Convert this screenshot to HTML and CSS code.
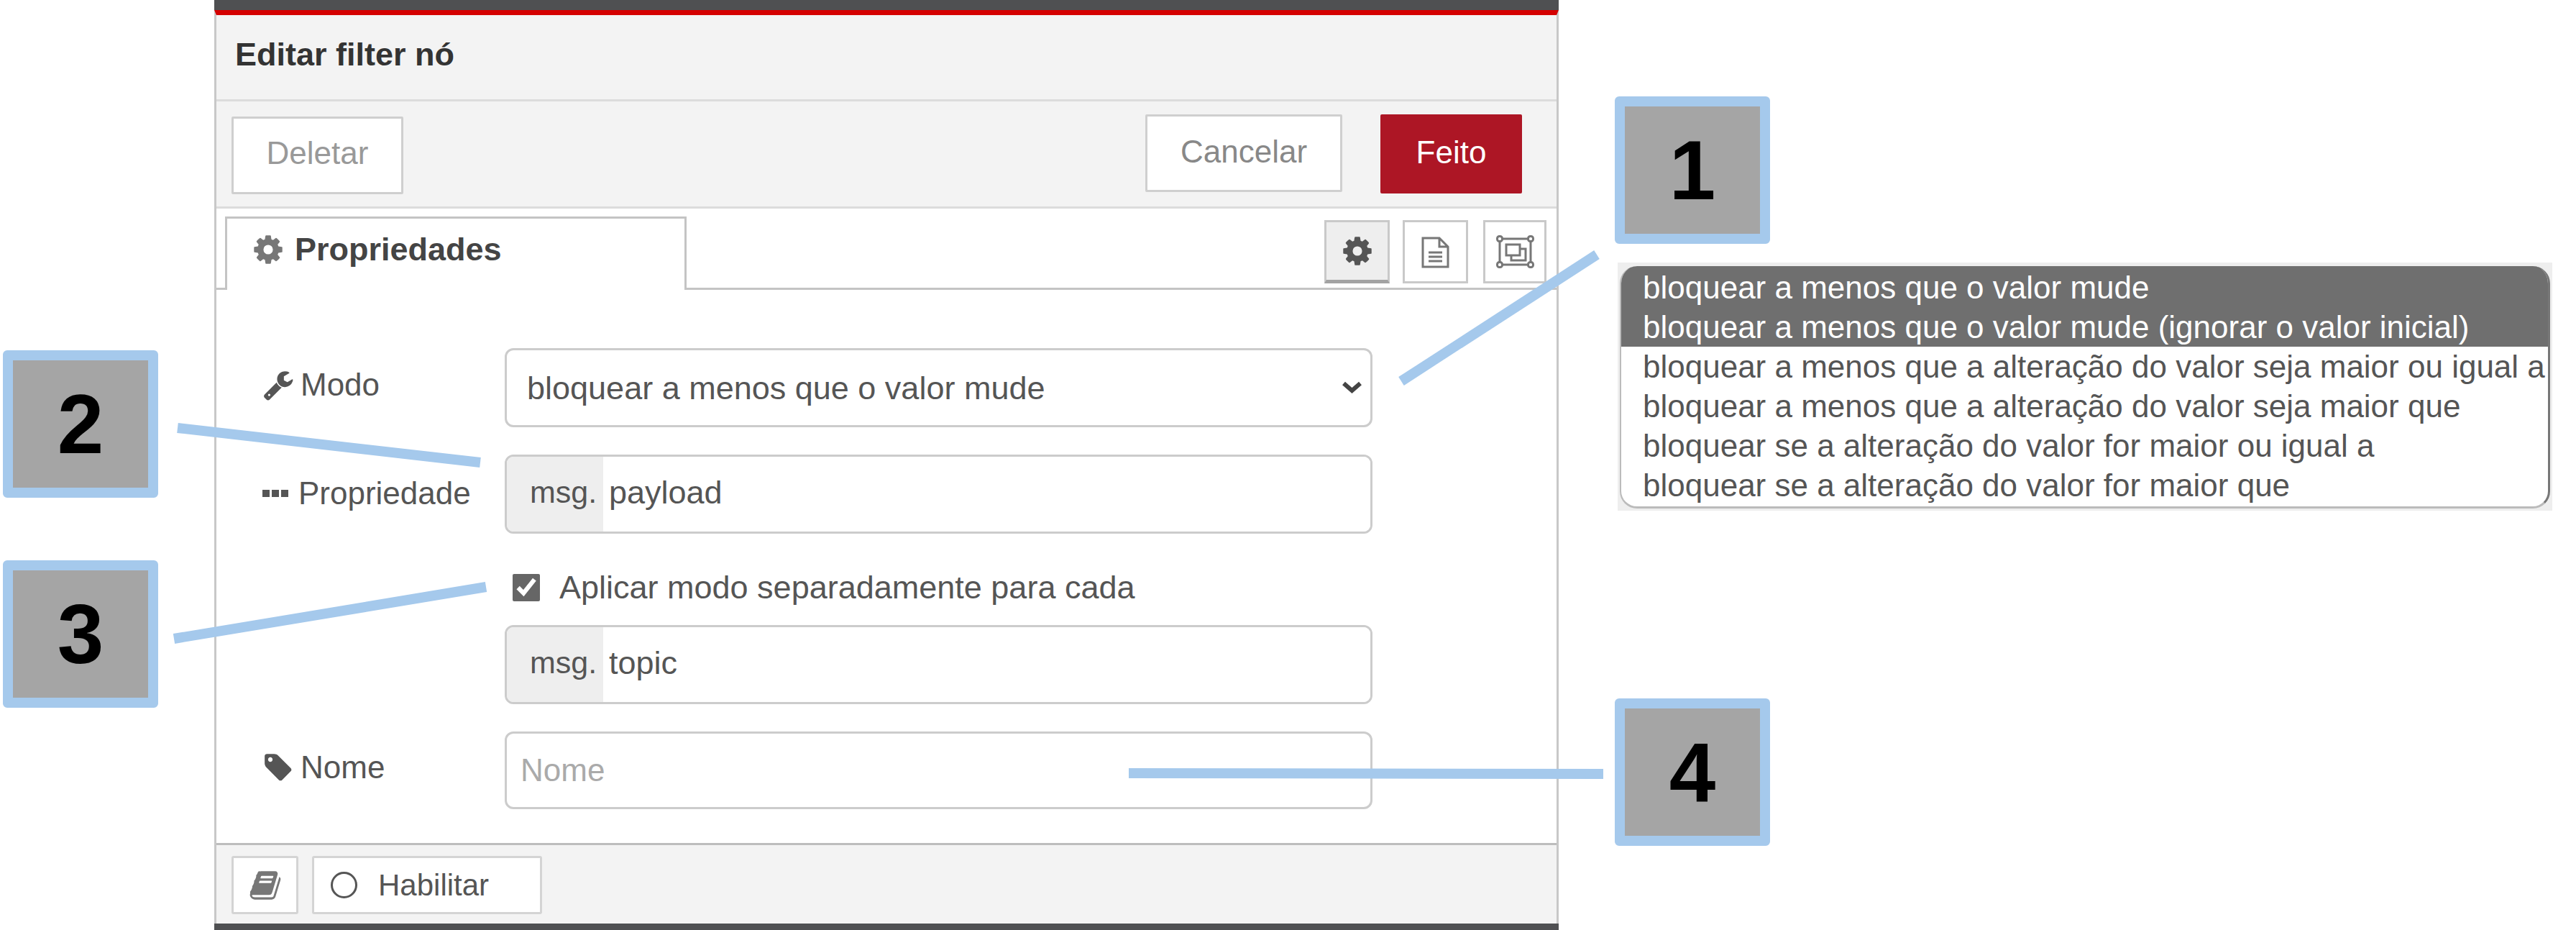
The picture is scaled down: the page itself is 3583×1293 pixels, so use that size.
FILE: index.html
```html
<!DOCTYPE html>
<html lang="pt-BR">
<head>
  <meta charset="UTF-8" />
  <title>Editar filter nó</title>
  <link rel="stylesheet" href="styles.css">
</head>
<body>
<svg class="icon-defs" width="0" height="0">
  <symbol id="i-cog" viewBox="0 0 1792 1792"><path d="M1152 896q0-106-75-181t-181-75-181 75-75 181 75 181 181 75 181-75 75-181zm512-109v222q0 12-8 23t-20 13l-185 28q-19 54-39 91 35 50 107 138 10 12 10 25t-9 23q-27 37-99 108t-94 71q-12 0-26-9l-138-108q-44 23-91 38-16 136-29 186-7 28-36 28h-222q-14 0-24.5-8.5t-11.5-21.5l-28-184q-49-16-90-37l-141 107q-10 9-25 9-14 0-25-11-126-114-165-168-7-10-7-23 0-12 8-23 15-21 51-66.5t54-70.5q-27-50-41-99l-183-27q-13-2-21-12.5t-8-23.5v-222q0-12 8-23t19-13l186-28q14-46 39-92-40-57-107-138-10-12-10-24 0-10 9-23 26-36 98.5-107.5t94.5-71.5q13 0 26 10l138 107q44-23 91-38 16-136 29-186 7-28 36-28h222q14 0 24.5 8.5t11.5 21.5l28 184q49 16 90 37l142-107q9-9 24-9 13 0 25 10 129 119 165 170 7 8 7 22 0 12-8 23-15 21-51 66.5t-54 70.5q26 50 41 98l183 28q13 2 21 12.5t8 23.5z"/></symbol>
  <symbol id="i-wrench" viewBox="0 0 1792 1792"><path d="M448 1472q0-26-19-45t-45-19-45 19-19 45 19 45 45 19 45-19 19-45zm644-420l-682 682q-37 37-90 37-52 0-91-37l-106-108q-38-36-38-90 0-53 38-91l681-681q39 98 114.5 173.5t173.5 114.5zm634-435q0 39-23 106-47 134-164.5 217.5t-258.5 83.5q-185 0-316.5-131.5t-131.5-316.5 131.5-316.5 316.5-131.5q58 0 121.5 16.5t107.5 46.5q16 11 16 28t-16 28l-293 169v224l193 107q5-3 79-48.5t135.5-81 70.5-35.5q15 0 23.5 10t8.5 25z"/></symbol>
  <symbol id="i-tag" viewBox="0 0 1792 1792"><path d="M576 448q0-53-37.5-90.5t-90.5-37.5-90.5 37.5-37.5 90.5 37.5 90.5 90.5 37.5 90.5-37.5 37.5-90.5zm1067 576q0 53-37 90l-491 492q-39 37-91 37-53 0-90-37l-715-716q-38-37-64.5-101t-26.5-117v-416q0-52 38-90t90-38h416q53 0 117 26.5t102 64.5l715 714q37 39 37 91z"/></symbol>
  <symbol id="i-book" viewBox="0 0 1792 1792"><path d="M1703 478q40 57 18 129l-275 906q-19 64-76.5 107.5t-122.5 43.5h-923q-77 0-148.5-53.5t-99.5-131.5q-24-67-2-127 0-4 3-27t4-37q1-8-3-21.5t-3-19.5q2-11 8-21t16.5-23.5 16.5-23.5q23-38 45-91.5t30-91.5q3-10 .5-30t-.5-28q3-11 17-28t17-23q21-36 42-92t25-90q1-9-2.5-32t.5-28q4-13 22-30.5t22-22.5q19-26 42.5-84.5t27.5-96.5q1-8-3-25.5t-2-26.5q2-8 9-18t18-23 17-21q8-12 16.5-30.5t15-35 16-36 19.5-32 26.5-23.5 36-11.5 47.5 5.5l-1 3q38-9 51-9h761q74 0 114 56t18 130l-274 906q-36 119-71.5 153.5t-128.5 34.5h-869q-27 0-38 15-11 16-1 43 24 70 144 70h923q29 0 56-15.5t35-41.5l300-987q7-22 5-57 38 15 59 43zm-1064 2q-4 13 2 22.5t20 9.5h608q13 0 25.5-9.5t16.5-22.5l21-64q4-13-2-22.5t-20-9.5h-608q-13 0-25.5 9.5t-16.5 22.5zm-83 256q-4 13 2 22.5t20 9.5h608q13 0 25.5-9.5t16.5-22.5l21-64q4-13-2-22.5t-20-9.5h-608q-13 0-25.5 9.5t-16.5 22.5z"/></symbol>
</svg>

<div class="editor">
  <div class="tray">
    <div class="tray-title">Editar filter nó</div>

    <div class="toolbar">
      <button class="btn btn-delete">Deletar</button>
      <button class="btn btn-cancel">Cancelar</button>
      <button class="btn btn-done">Feito</button>
    </div>

    <div class="tabs">
      <div class="tab">
        <svg class="tab-icon"><use href="#i-cog"/></svg>
        Propriedades
      </div>
      <div class="tab-buttons">
        <div class="tab-btn tab-btn-active">
          <svg class="tab-btn-cog"><use href="#i-cog"/></svg>
        </div>
        <div class="tab-btn">
          <svg class="tab-btn-doc" viewBox="0 0 39 45">
            <path d="M2 3 h23 l12 12 v28 h-35 z M25 3 v12 h12" />
            <path d="M10 23 h19 M10 29 h19 M10 35 h19" />
          </svg>
        </div>
        <div class="tab-btn tab-btn-frame">
          <svg class="tab-btn-appear" viewBox="0 0 53 46">
            <path d="M8 5 h37 M8 41 h37 M5 8 v30 M48 8 v30" />
            <rect x="1.5" y="1.5" width="7" height="7" rx="3"/>
            <rect x="44.5" y="1.5" width="7" height="7" rx="3"/>
            <rect x="1.5" y="37.5" width="7" height="7" rx="3"/>
            <rect x="44.5" y="37.5" width="7" height="7" rx="3"/>
            <rect x="14" y="13" width="19" height="15"/>
            <path d="M33 19 h8 v16 h-20 v-7" />
          </svg>
        </div>
      </div>
    </div>

    <div class="form">
      <div class="form-row">
        <label class="form-label"><svg class="label-icon"><use href="#i-wrench"/></svg>Modo</label>
        <div class="select-wrap">
          <select class="field select-field">
            <option>bloquear a menos que o valor mude</option>
          </select>
          <svg class="select-arrow" viewBox="0 0 29 17"><path d="M3 3 L14.5 13 L26 3"/></svg>
        </div>
      </div>

      <div class="form-row">
        <label class="form-label label-prop"><svg class="label-dots" viewBox="0 0 36 10"><rect width="10" height="10"/><rect x="13" width="10" height="10"/><rect x="26" width="10" height="10"/></svg>Propriedade</label>
        <div class="field typed-field">
          <span class="typed-prefix">msg.</span>
          <input class="typed-input" type="text" value="payload" />
        </div>
      </div>

      <div class="check-row">
        <input class="check-box" type="checkbox" checked />
        <span>Aplicar modo separadamente para cada</span>
      </div>

      <div class="form-row">
        <div class="form-label"></div>
        <div class="field typed-field">
          <span class="typed-prefix">msg.</span>
          <input class="typed-input" type="text" value="topic" />
        </div>
      </div>

      <div class="form-row">
        <label class="form-label"><svg class="label-icon"><use href="#i-tag"/></svg>Nome</label>
        <input class="field name-field" type="text" placeholder="Nome" />
      </div>
    </div>

    <div class="tray-footer">
      <button class="foot-btn foot-book"><svg class="book-icon"><use href="#i-book"/></svg></button>
      <button class="foot-btn foot-enable"><span class="enable-dot"></span>Habilitar</button>
    </div>
  </div>
</div>

<!-- anotacoes por cima do print -->
<div class="dropdown">
  <div class="dropdown-list">
    <div class="dropdown-item dropdown-item-on">bloquear a menos que o valor mude</div>
    <div class="dropdown-item dropdown-item-on">bloquear a menos que o valor mude (ignorar o valor inicial)</div>
    <div class="dropdown-item">bloquear a menos que a alteração do valor seja maior ou igual a</div>
    <div class="dropdown-item">bloquear a menos que a alteração do valor seja maior que</div>
    <div class="dropdown-item">bloquear se a alteração do valor for maior ou igual a</div>
    <div class="dropdown-item">bloquear se a alteração do valor for maior que</div>
  </div>
</div>

<svg class="leaders" viewBox="0 0 3583 1293">
  <line x1="1949" y1="530" x2="2221" y2="354"/>
  <line x1="247" y1="595" x2="668" y2="643"/>
  <line x1="242" y1="888" x2="676" y2="816"/>
  <line x1="1570" y1="1075" x2="2230" y2="1076"/>
</svg>

<div class="callout callout-1">1</div>
<div class="callout callout-2">2</div>
<div class="callout callout-3">3</div>
<div class="callout callout-4">4</div>
</body>
</html>
```

FILE: styles.css
```css
* { box-sizing: border-box; margin: 0; padding: 0; }
body {
  position: relative;
  width: 3583px;
  height: 1293px;
  overflow: hidden;
  background: #fff;
  font-family: "Liberation Sans", Arial, sans-serif;
  font-size: 44px;
  color: #555;
}
button, input, select {
  font-family: inherit;
  font-size: inherit;
  color: inherit;
}
.icon-defs {
  position: absolute;
}

/* painel */
.editor {
  margin-left: 298px;
  width: 1870px;
  height: 1293px;
  border-top: 14px solid #4f5052;
  border-bottom: 9px solid #4f5052;
}
.tray {
  height: 100%;
  display: flex;
  flex-direction: column;
  border-top: 7px solid #d40000;
  border-left: 3px solid #c8c8c8;
  border-right: 3px solid #c8c8c8;
}
.tray-title {
  height: 120px;
  padding: 0 0 8px 26px;
  display: flex;
  align-items: center;
  background: #f3f3f3;
  border-bottom: 3px solid #dcdcdc;
  font-size: 45px;
  font-weight: bold;
  color: #333;
}
.toolbar {
  height: 149px;
  display: flex;
  align-items: center;
  padding: 0 48px 0 21px;
  background: #f3f3f3;
  border-bottom: 3px solid #dcdcdc;
}
.btn {
  height: 108px;
  padding-bottom: 5px;
  background: #fff;
  border: 3px solid #cfcfcf;
  border-radius: 2px;
  color: #999;
}
.btn-delete {
  width: 239px;
  margin-top: 3px;
}
.btn-cancel {
  width: 274px;
  margin: -2px 0 0 auto;
  color: #888;
}
.btn-done {
  width: 197px;
  height: 110px;
  margin-left: 53px;
  background: #ad1625;
  border: none;
  color: #fff;
}

/* abas */
.tabs {
  height: 113px;
  display: flex;
  justify-content: space-between;
  padding: 11px 14px 0 12px;
  border-bottom: 3px solid #c4c4c4;
}
.tab {
  width: 642px;
  height: 102px;
  padding: 0 0 14px 34px;
  display: flex;
  align-items: center;
  background: #fff;
  border: 3px solid #c4c4c4;
  border-bottom: none;
  font-size: 45px;
  font-weight: bold;
  color: #444;
}
.tab-icon {
  width: 46px;
  height: 46px;
  margin-right: 14px;
  fill: #777;
}
.tab-buttons {
  display: flex;
  height: 88px;
  margin-top: 5px;
  gap: 18px;
}
.tab-btn {
  width: 91px;
  display: flex;
  align-items: center;
  justify-content: center;
  border: 3px solid #c9c9c9;
}
.tab-btn-active {
  background: #eee;
  border-bottom: 5px solid #a3a3a3;
}
.tab-btn-frame {
  width: 88px;
  margin-left: 3px;
}
.tab-btn-cog {
  width: 46px;
  height: 46px;
  fill: #555;
}
.tab-btn-doc {
  width: 39px;
  height: 45px;
  fill: none;
  stroke: #777;
  stroke-width: 3;
}
.tab-btn-appear {
  width: 53px;
  height: 46px;
  fill: none;
  stroke: #777;
  stroke-width: 3;
}

/* formulario */
.form {
  flex: 1;
  padding: 81px 0 0 64px;
}
.form-row {
  display: flex;
  align-items: center;
  margin-bottom: 38px;
}
.form-label {
  width: 337px;
  display: flex;
  align-items: center;
  padding-bottom: 8px;
  white-space: nowrap;
}
.label-prop {
  padding-bottom: 2px;
}
.label-icon {
  width: 44px;
  height: 44px;
  margin-right: 9px;
  fill: #555;
}
.label-dots {
  width: 36px;
  height: 10px;
  margin-right: 14px;
  fill: #555;
}
.field {
  width: 1207px;
  height: 110px;
  background: #fff;
  border: 3px solid #ccc;
  border-radius: 12px;
  outline: none;
}
.select-wrap {
  position: relative;
}
.select-field {
  display: block;
  padding-left: 28px;
  font-size: 45px;
  appearance: none;
}
.select-arrow {
  position: absolute;
  right: 14px;
  top: 46px;
  width: 29px;
  height: 17px;
  fill: none;
  stroke: #444;
  stroke-width: 6;
}
.typed-field {
  display: flex;
  overflow: hidden;
}
.typed-prefix {
  width: 134px;
  display: flex;
  align-items: center;
  padding: 0 0 6px 32px;
  background: #eee;
  font-size: 43px;
}
.typed-input {
  flex: 1;
  padding: 0 0 4px 8px;
  border: none;
  outline: none;
  font-size: 45px;
}
.check-row {
  display: flex;
  align-items: center;
  height: 39px;
  margin: 55px 0 33px 348px;
  font-size: 45px;
}
.check-box {
  width: 38px;
  height: 38px;
  margin: 0 27px 0 0;
  accent-color: #666;
}
.name-field {
  height: 108px;
  padding-left: 19px;
}
.name-field::placeholder {
  color: #aaa;
}

/* rodape */
.tray-footer {
  height: 112px;
  display: flex;
  align-items: center;
  gap: 19px;
  padding: 2px 0 0 21px;
  background: #f3f3f3;
  border-top: 3px solid #bdbdbd;
}
.foot-btn {
  height: 81px;
  display: flex;
  align-items: center;
  background: #fff;
  border: 3px solid #d4d4d4;
  border-radius: 3px;
}
.foot-book {
  width: 93px;
  justify-content: center;
}
.book-icon {
  width: 46px;
  height: 46px;
  fill: #777;
}
.foot-enable {
  width: 320px;
  padding-left: 23px;
  font-size: 42px;
}
.enable-dot {
  width: 37px;
  height: 37px;
  margin-right: 29px;
  border: 3px solid #555;
  border-radius: 50%;
}

/* anotacoes */
.dropdown {
  position: absolute;
  left: 2250px;
  top: 365px;
  width: 1300px;
  height: 345px;
  padding: 5px 3px 3px;
  background: #eee;
}
.dropdown-list {
  height: 100%;
  padding-top: 2px;
  overflow: hidden;
  background: linear-gradient(#6f6f6f 4px, #fff 4px);
  border-left: 2px solid #bbb;
  border-right: 3px solid #777;
  border-bottom: 3px solid #bbb;
  border-radius: 24px;
}
.dropdown-item {
  height: 55px;
  line-height: 55px;
  padding-left: 30px;
  white-space: nowrap;
}
.dropdown-item-on {
  background: #6f6f6f;
  color: #fff;
}
.leaders {
  position: absolute;
  left: 0;
  top: 0;
  width: 3583px;
  height: 1293px;
  stroke: #a5c9ec;
  stroke-width: 14;
  pointer-events: none;
}
.callout {
  position: absolute;
  width: 216px;
  height: 205px;
  display: flex;
  align-items: center;
  justify-content: center;
  background: #a5a5a5;
  border: 14px solid #a5c9ec;
  border-radius: 6px;
  font-size: 116px;
  font-weight: bold;
  color: #000;
}
.callout-1 { left: 2246px; top: 134px; }
.callout-2 { left: 4px; top: 487px; }
.callout-3 { left: 4px; top: 779px; }
.callout-4 { left: 2246px; top: 971px; }
```
